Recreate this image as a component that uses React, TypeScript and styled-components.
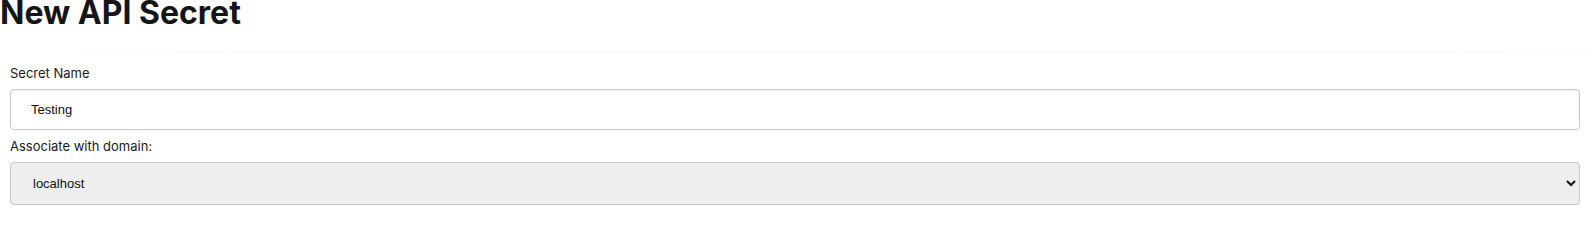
import React from "react";
import styled, { createGlobalStyle } from "styled-components";

const Global = createGlobalStyle`
  html, body { margin: 0; padding: 0; background: #ffffff; }
  body { font-family: Inter, "Noto Sans", sans-serif; color: #111; overflow: hidden; }
`;

const Page = styled.div`
  display: flex;
  flex-direction: column;
`;

const Title = styled.h1`
  margin: -7px 0 0 0;
  font-family: Inter, sans-serif;
  font-weight: 700;
  font-size: 32px;
  line-height: 40px;
  color: #151515;
  letter-spacing: 0;
`;

const Divider = styled.div`
  margin: 17px 0 0 32px;
  height: 3px;
  background: linear-gradient(to right, rgba(0,0,0,0) 0%, rgba(0,0,0,0.025) 20%, rgba(0,0,0,0.025) 85%, rgba(0,0,0,0.005) 100%);
`;

const Form = styled.form`
  display: flex;
  flex-direction: column;
  padding: 12px 10px 0 10px;
`;

const Label = styled.label`
  display: block;
  font-family: Inter, sans-serif;
  font-size: 13px;
  line-height: 16px;
  color: #1a1a1a;
  margin-bottom: 8px;
`;

const Field = styled.div<{ $gap?: number }>`
  display: flex;
  flex-direction: column;
  margin-bottom: ${(p) => p.$gap ?? 7}px;
`;

const TextInput = styled.input`
  box-sizing: border-box;
  height: 41px;
  width: 100%;
  padding: 0 20px;
  border: 1px solid #c8c8c8;
  border-radius: 4px;
  background: #fff;
  box-shadow: inset 0 1px 2px rgba(0,0,0,0.06);
  font-family: "Liberation Sans", Arial, sans-serif;
  font-size: 13px;
  color: #111;
  outline: none;
`;

const Select = styled.select`
  box-sizing: border-box;
  height: 43px;
  width: 100%;
  padding: 0 18px;
  border: 1px solid #c8c8c8;
  border-radius: 4px;
  background: #eeeeee;
  font-family: "Liberation Sans", Arial, sans-serif;
  font-size: 13px;
  color: #111;
  outline: none;
`;

export default function App() {
  return (
    <Page>
      <Global />
      <Title>New API Secret</Title>
      <Divider />
      <Form onSubmit={(e) => e.preventDefault()}>
        <Field $gap={8}>
          <Label htmlFor="secret-name">Secret Name</Label>
          <TextInput id="secret-name" defaultValue="Testing" />
        </Field>
        <Field>
          <Label htmlFor="domain">Associate with domain:</Label>
          <Select id="domain" defaultValue="localhost">
            <option value="localhost">localhost</option>
          </Select>
        </Field>
      </Form>
    </Page>
  );
}
